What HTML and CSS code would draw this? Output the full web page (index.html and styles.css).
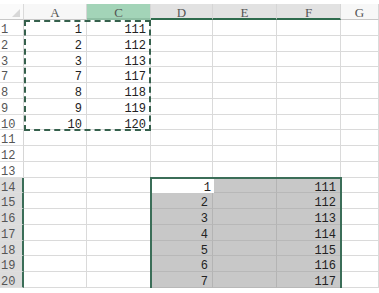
FILE: index.html
```html
<!DOCTYPE html>
<html lang="en">
<head>
    <meta charset="UTF-8">
    <title>Sheet</title>
    <link rel="stylesheet" href="styles.css">
</head>
<body>
    <div class="sheet">
        <div class="grid">
            <div class="corner"><span class="tri"></span></div>
            <div class="ch">A</div>
            <div class="ch copied">C</div>
            <div class="ch sel">D</div>
            <div class="ch sel">E</div>
            <div class="ch sel">F</div>
            <div class="ch">G</div>

            <div class="rh">1</div><div class="c">1</div><div class="c">111</div><div class="c"></div><div class="c"></div><div class="c"></div><div class="c"></div>
            <div class="rh">2</div><div class="c">2</div><div class="c">112</div><div class="c"></div><div class="c"></div><div class="c"></div><div class="c"></div>
            <div class="rh">3</div><div class="c">3</div><div class="c">113</div><div class="c"></div><div class="c"></div><div class="c"></div><div class="c"></div>
            <div class="rh">7</div><div class="c">7</div><div class="c">117</div><div class="c"></div><div class="c"></div><div class="c"></div><div class="c"></div>
            <div class="rh">8</div><div class="c">8</div><div class="c">118</div><div class="c"></div><div class="c"></div><div class="c"></div><div class="c"></div>
            <div class="rh">9</div><div class="c">9</div><div class="c">119</div><div class="c"></div><div class="c"></div><div class="c"></div><div class="c"></div>
            <div class="rh">10</div><div class="c">10</div><div class="c">120</div><div class="c"></div><div class="c"></div><div class="c"></div><div class="c"></div>
            <div class="rh">11</div><div class="c"></div><div class="c"></div><div class="c"></div><div class="c"></div><div class="c"></div><div class="c"></div>
            <div class="rh">12</div><div class="c"></div><div class="c"></div><div class="c"></div><div class="c"></div><div class="c"></div><div class="c"></div>
            <div class="rh">13</div><div class="c"></div><div class="c"></div><div class="c"></div><div class="c"></div><div class="c"></div><div class="c"></div>
            <div class="rh sel">14</div><div class="c"></div><div class="c"></div><div class="c"></div><div class="c fill"></div><div class="c fill">111</div><div class="c"></div>
            <div class="rh sel">15</div><div class="c"></div><div class="c"></div><div class="c fill">2</div><div class="c fill"></div><div class="c fill">112</div><div class="c"></div>
            <div class="rh sel">16</div><div class="c"></div><div class="c"></div><div class="c fill">3</div><div class="c fill"></div><div class="c fill">113</div><div class="c"></div>
            <div class="rh sel">17</div><div class="c"></div><div class="c"></div><div class="c fill">4</div><div class="c fill"></div><div class="c fill">114</div><div class="c"></div>
            <div class="rh sel">18</div><div class="c"></div><div class="c"></div><div class="c fill">5</div><div class="c fill"></div><div class="c fill">115</div><div class="c"></div>
            <div class="rh sel">19</div><div class="c"></div><div class="c"></div><div class="c fill">6</div><div class="c fill"></div><div class="c fill">116</div><div class="c"></div>
            <div class="rh sel">20</div><div class="c"></div><div class="c"></div><div class="c fill">7</div><div class="c fill"></div><div class="c fill">117</div><div class="c"></div>
        </div>

        <!-- marching ants round the copied range, and the selected range -->
        <div class="marquee"></div>
        <div class="selection"><div class="active-cell">1</div></div>
    </div>
</body>
</html>
```

FILE: styles.css
```css
* {
    margin: 0;
    padding: 0;
    box-sizing: border-box;
}

body {
    background: #fff;
    font-family: 'Liberation Mono', monospace;
    overflow: hidden;
}

.sheet {
    position: relative;
    padding-top: 4px;
}

.grid {
    display: grid;
    grid-template-columns: 24px 63px 64px 62px 64px 64px 38px;
    grid-template-rows: 16px;
    grid-auto-rows: 15.75px;
}

.corner {
    position: relative;
    background: #fafafa;
    border-right: 1px solid #dadada;
    border-bottom: 1px solid #c8c8c8;
}

.tri {
    position: absolute;
    right: 3px;
    bottom: 2px;
    width: 0;
    height: 0;
    border-left: 8px solid transparent;
    border-bottom: 8px solid #d8d8d8;
}

.ch {
    font-family: 'Liberation Serif', serif;
    font-size: 13px;
    color: #555;
    text-align: center;
    padding-top: 2px;
    line-height: 14px;
    background: #f7f7f7;
    border-right: 1px solid #d6d6d6;
    border-bottom: 1px solid #c8c8c8;
}

.ch.copied {
    background: #a3d4b8;
    border-bottom: 2px solid #8fbfa4;
}

.ch.sel {
    background: #e2e2e2;
    border-bottom: 2px solid #2f6b4d;
}

.rh {
    font-size: 12px;
    color: #555;
    padding-left: 1px;
    padding-top: 3px;
    line-height: 14px;
    border-right: 1px solid #d6d6d6;
    border-bottom: 1px solid #dedede;
    overflow: hidden;
}

.rh.sel {
    background: #dcdcdc;
    border-right: 2px solid #3b6e58;
}

.c {
    font-size: 12px;
    color: #222;
    text-align: right;
    padding-right: 4px;
    padding-top: 3px;
    line-height: 14px;
    border-right: 1px solid #dadada;
    border-bottom: 1px solid #dadada;
    overflow: hidden;
}

.c.fill {
    background: #c8c8c8;
    border-right-color: #b4b4b4;
    border-bottom-color: #b8b8b8;
}

.marquee {
    position: absolute;
    left: 24px;
    top: 20px;
    width: 127px;
    height: 111px;
    border: 2px dashed #35604c;
}

.selection {
    position: absolute;
    left: 150px;
    top: 177px;
    width: 192px;
    height: 120px;
    border: 2px solid #3b6e58;
}

.active-cell {
    width: 62px;
    height: 14px;
    background: #fff;
    font-size: 12px;
    color: #222;
    text-align: right;
    padding-right: 3px;
    padding-top: 2px;
    line-height: 14px;
}
```
